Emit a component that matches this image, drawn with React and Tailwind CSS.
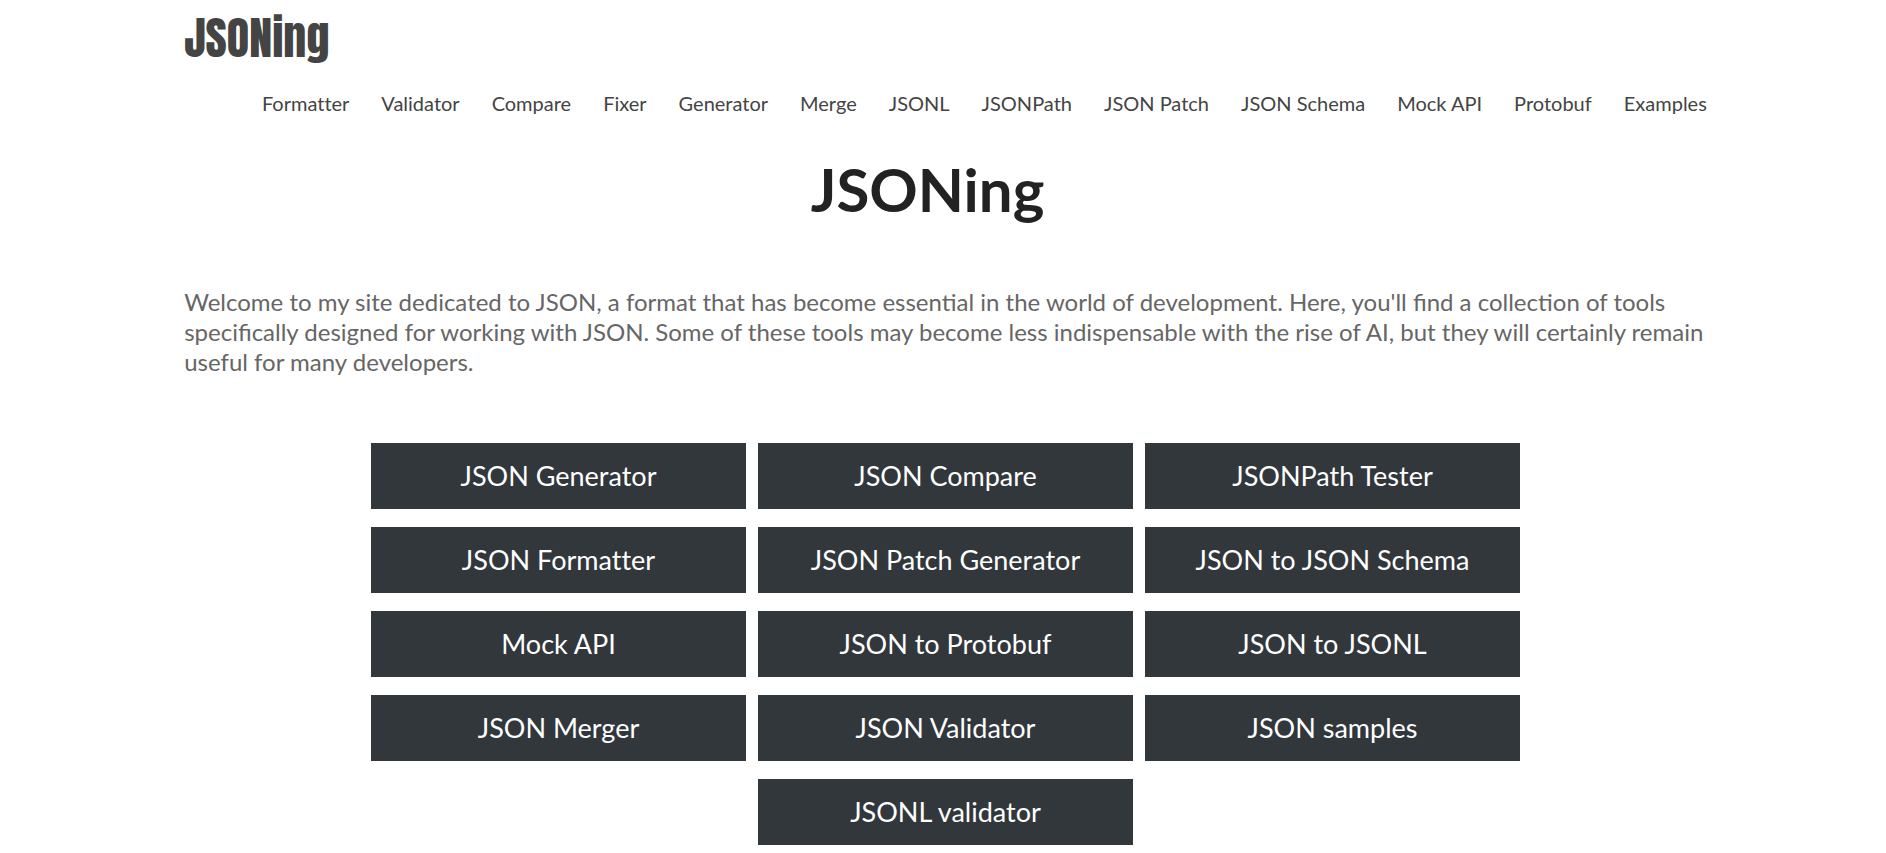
const nav = ["Formatter","Validator","Compare","Fixer","Generator","Merge","JSONL","JSONPath","JSON Patch","JSON Schema","Mock API","Protobuf","Examples"];
const tools = ["JSON Generator","JSON Compare","JSONPath Tester","JSON Formatter","JSON Patch Generator","JSON to JSON Schema","Mock API","JSON to Protobuf","JSON to JSONL","JSON Merger","JSON Validator","JSON samples","JSONL validator"];

export default function App() {
  return (
    <div className="bg-white font-[Lato,sans-serif] text-[#666]">
      <div className="mx-auto w-[81%] pl-[5px]">
        <header className="pt-3">
          <a href="#" className="inline-block font-[Impact,Anton,sans-serif] text-[46px] leading-[52px] font-normal text-[#444]">JSONing</a>
          <nav aria-label="Main" className="mt-6 flex flex-wrap justify-end gap-x-8 text-[20px] leading-[30px] text-[#444] [font-variant-ligatures:none]">
            {nav.map((n) => <a key={n} href="#">{n}</a>)}
          </nav>
        </header>
        <main>
          <h1 className="mt-[35px] pr-9 text-center text-[60px] leading-[72px] font-bold text-[#222]">JSONing</h1>
          <p className="mt-[62px] text-[24px] leading-[30px]">Welcome to my site dedicated to JSON, a format that has become essential in the world of development. Here, you'll find a collection of tools specifically designed for working with JSON. Some of these tools may become less indispensable with the rise of AI, but they will certainly remain useful for many developers.</p>
          <div className="mt-[66px] flex flex-wrap justify-center gap-x-3 gap-y-[18px] [font-variant-ligatures:none]">
            {tools.map((t) => <a key={t} href="#" className="w-[375px] bg-[#32373c] py-[13px] text-center text-[27px] leading-[40px] text-white">{t}</a>)}
          </div>
        </main>
      </div>
    </div>
  );
}
